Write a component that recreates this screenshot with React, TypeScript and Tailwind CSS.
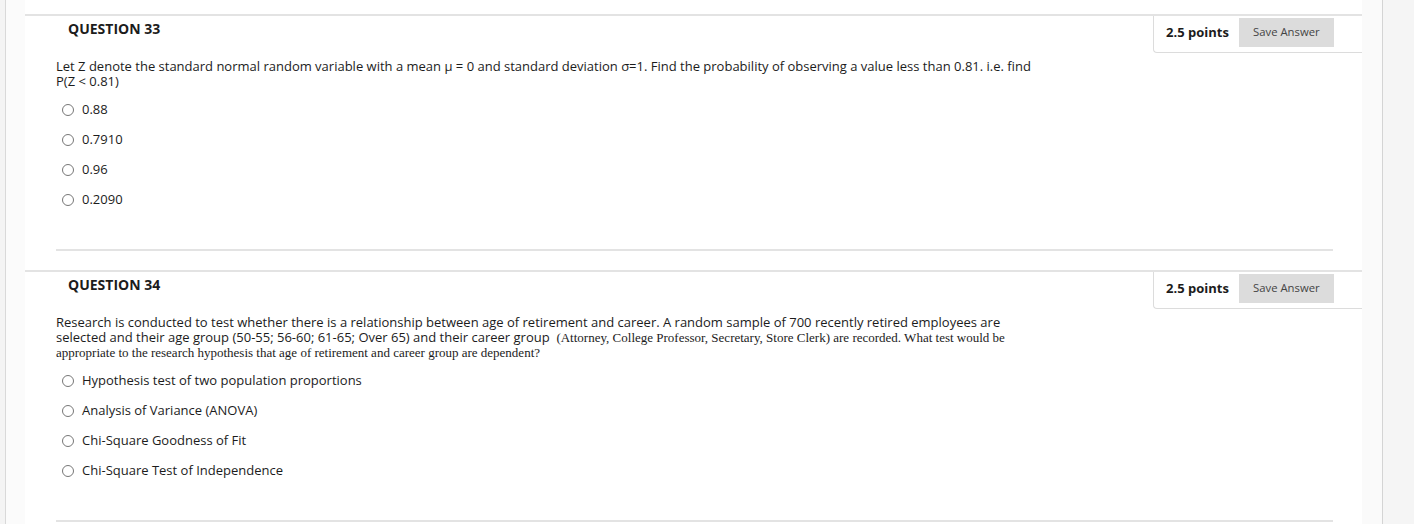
type QuestionProps = {
  number: number
  points: string
  body: React.ReactNode
  options: string[]
}

const Radio = () => (
  <span className="ml-[6px] inline-block h-[12px] w-[12px] shrink-0 rounded-full border border-[#777] bg-white" />
)

const Question = ({ number, points, body, options }: QuestionProps) => {
  return (
    <section className="mb-[19px] border-t-2 border-[#e3e3e3]">
      <div className="flex h-[37px] justify-between">
        <h3 className="pl-[43px] pt-[3px] text-[14px] font-bold leading-[20px] text-[#1c1c1c]">
          QUESTION {number}
        </h3>
        <div className="flex w-[209px] items-start gap-[10px] rounded-bl-[4px] border-b border-l border-[#dcdcdc] pl-[12px] pt-[2px]">
          <span className="flex h-[29px] items-center text-[13px] font-bold text-[#1c1c1c]">{points}</span>
          <button className="h-[29px] w-[95px] bg-[#dcdcdc] text-[11.3px] text-[#444]">Save Answer</button>
        </div>
      </div>

      <div className="ml-[31px] mt-[6px] w-[990px] text-[13px] leading-[15px] text-[#1c1c1c]">{body}</div>

      <ul className="ml-[31px] mt-[6px]">
        {options.map((opt) => (
          <li key={opt} className="flex h-[30px] items-center">
            <Radio />
            <span className="ml-[8px] text-[13px] text-[#1c1c1c]">{opt}</span>
          </li>
        ))}
      </ul>

      <div className="ml-[31px] mr-[29px] mt-[34px] h-[2px] bg-[#e3e3e3]" />
    </section>
  )
}

export default function App() {
  return (
    <div className="flex h-[524px] w-full overflow-hidden bg-white font-['Open_Sans','Liberation_Sans',sans-serif]">
      <div className="w-[6px] shrink-0 border-r border-[#d9d9d9] bg-[#f4f4f4]" />
      <div className="w-[19px] shrink-0 bg-[#fbfbfb]" />

      <main className="w-[1337px] shrink-0 pt-[14px]">
        <Question
          number={33}
          points="2.5 points"
          body={
            <p>
              Let Z denote the standard normal random variable with a mean μ = 0 and standard deviation σ=1. Find the
              probability of observing a value less than 0.81. i.e. find P(Z &lt; 0.81)
            </p>
          }
          options={['0.88', '0.7910', '0.96', '0.2090']}
        />
        <Question
          number={34}
          points="2.5 points"
          body={
            <p>
              Research is conducted to test whether there is a relationship between age of retirement and career. A
              random sample of 700 recently retired employees are selected and their age group (50-55; 56-60; 61-65;
              Over 65) and their career group{'\u00a0 '}
              <span className="font-['Liberation_Serif',serif] text-[13px] leading-[15px]">
                (Attorney, College Professor, Secretary, Store Clerk) are recorded. What test would be appropriate to
                the research hypothesis that age of retirement and career group are dependent?
              </span>
            </p>
          }
          options={[
            'Hypothesis test of two population proportions',
            'Analysis of Variance (ANOVA)',
            'Chi-Square Goodness of Fit',
            'Chi-Square Test of Independence',
          ]}
        />
      </main>

      <div className="w-[21px] shrink-0 border-r border-[#d4d4d4] bg-[#fafafa]" />
      <div className="flex-1 bg-[#f5f5f5]" />
    </div>
  )
}
